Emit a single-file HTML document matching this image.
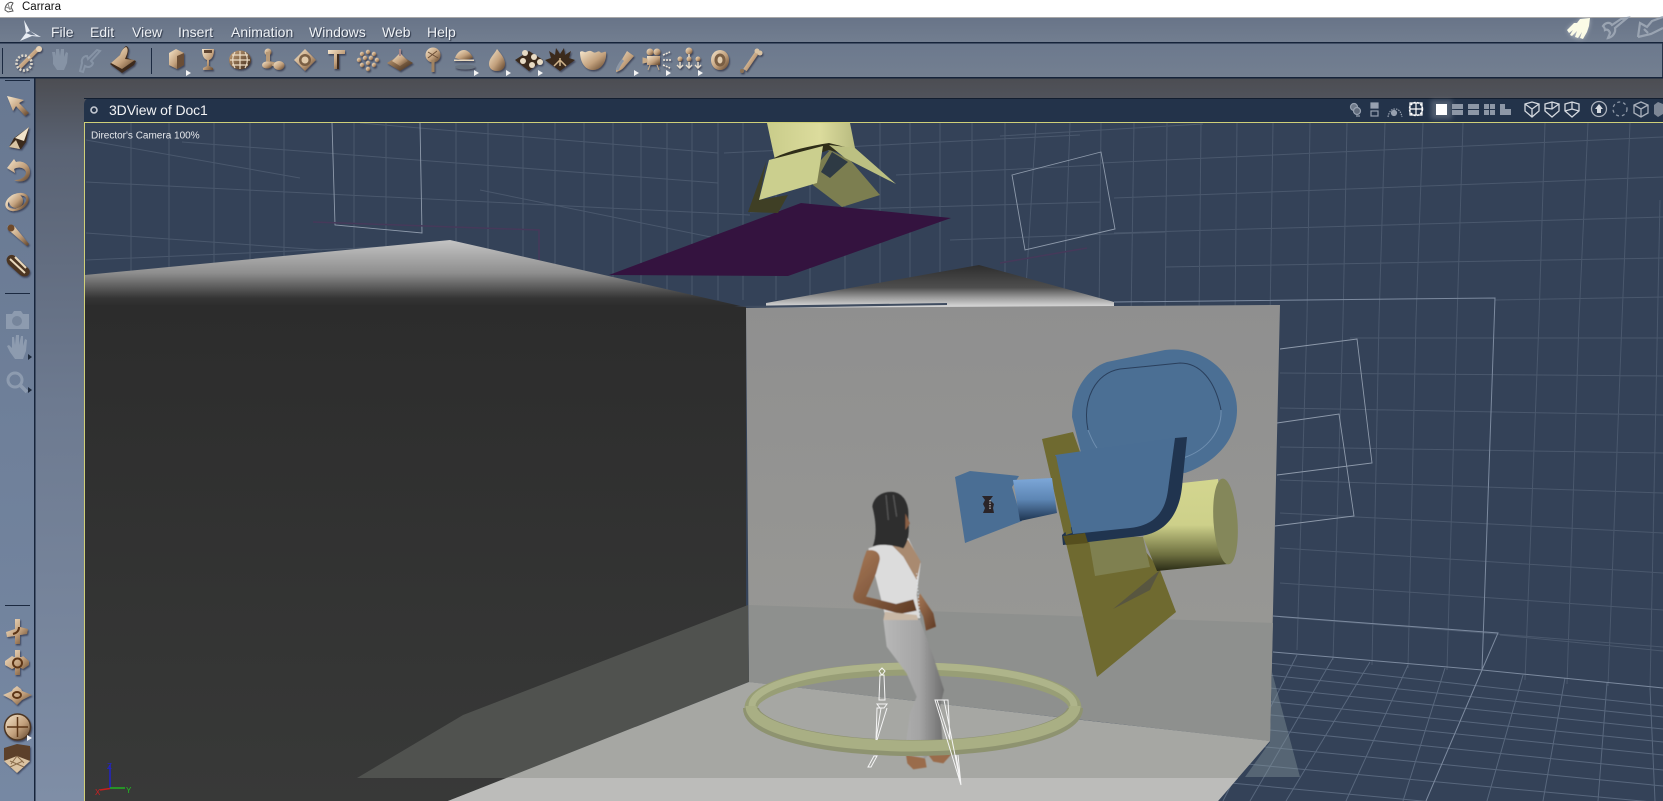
<!DOCTYPE html>
<html><head><meta charset="utf-8"><title>Carrara</title>
<style>
html,body{margin:0;padding:0;background:#344258;width:1663px;height:801px;overflow:hidden}
svg{display:block}
text{font-family:"Liberation Sans",sans-serif}
</style></head><body>
<svg xmlns="http://www.w3.org/2000/svg" width="1663" height="801" viewBox="0 0 1663 801">
<defs>
<linearGradient id="b" x1="0" y1="0" x2="1" y2="1"><stop offset="0" stop-color="#f6e6cc"/><stop offset=".55" stop-color="#c2a07c"/><stop offset="1" stop-color="#5c4028"/></linearGradient>
<linearGradient id="bd" x1="0" y1="0" x2="1" y2="1"><stop offset="0" stop-color="#c9a47c"/><stop offset="1" stop-color="#3a2616"/></linearGradient>
<linearGradient id="work" x1="0" y1="78" x2="0" y2="801" gradientUnits="userSpaceOnUse"><stop offset="0" stop-color="#4c4d52"/><stop offset=".1" stop-color="#5a6374"/><stop offset=".45" stop-color="#6d7a90"/><stop offset="1" stop-color="#7f8ea6"/></linearGradient>
<linearGradient id="menu" x1="0" y1="0" x2="0" y2="1"><stop offset="0" stop-color="#687488"/><stop offset="1" stop-color="#727e90"/></linearGradient>
<linearGradient id="tool" x1="0" y1="0" x2="0" y2="1"><stop offset="0" stop-color="#6c798e"/><stop offset="1" stop-color="#737f90"/></linearGradient>
<linearGradient id="side" x1="0" y1="0" x2="0" y2="1"><stop offset="0" stop-color="#687891"/><stop offset="1" stop-color="#7688a3"/></linearGradient>
<linearGradient id="lw" x1="0" y1="240" x2="0" y2="306" gradientUnits="userSpaceOnUse"><stop offset="0" stop-color="#c4c4c4"/><stop offset=".5" stop-color="#8e8e8e"/><stop offset=".72" stop-color="#5a5a5a"/><stop offset=".88" stop-color="#353535"/><stop offset="1" stop-color="#2c2c2c"/></linearGradient>
<linearGradient id="dw" x1="0" y1="300" x2="0" y2="801" gradientUnits="userSpaceOnUse"><stop offset="0" stop-color="#2c2c2c"/><stop offset="1" stop-color="#383938"/></linearGradient>
<linearGradient id="rt" x1="0" y1="265" x2="0" y2="306" gradientUnits="userSpaceOnUse"><stop offset="0" stop-color="#2e2e2e"/><stop offset=".55" stop-color="#4e4e4e"/><stop offset=".8" stop-color="#9c9c9c"/><stop offset="1" stop-color="#d4d4d4"/></linearGradient>
<linearGradient id="wall" x1="0" y1="305" x2="0" y2="620" gradientUnits="userSpaceOnUse"><stop offset="0" stop-color="#8f8f8f"/><stop offset="1" stop-color="#979794"/></linearGradient>
<linearGradient id="cyl" x1="0" y1="0" x2="1" y2="0"><stop offset="0" stop-color="#c9cc8a"/><stop offset=".6" stop-color="#dcdc9d"/><stop offset="1" stop-color="#b8bb80"/></linearGradient>
<linearGradient id="ycyl" x1="0" y1="0" x2="0" y2="1"><stop offset="0" stop-color="#d3d68f"/><stop offset=".5" stop-color="#cdd08a"/><stop offset=".82" stop-color="#6e7040"/><stop offset="1" stop-color="#2a2b16"/></linearGradient>
<linearGradient id="lens" x1="0" y1="0" x2="0" y2="1"><stop offset="0" stop-color="#7da7d8"/><stop offset=".5" stop-color="#5d86b4"/><stop offset="1" stop-color="#1e3450"/></linearGradient>
<linearGradient id="pants" x1="0" y1="0" x2="1" y2="0"><stop offset="0" stop-color="#b8b8b8"/><stop offset=".6" stop-color="#a4a4a4"/><stop offset="1" stop-color="#6e6e6e"/></linearGradient>
<linearGradient id="skin" x1="0" y1="0" x2="1" y2="1"><stop offset="0" stop-color="#a87a58"/><stop offset="1" stop-color="#5e3a24"/></linearGradient>
<filter id="s" x="-30%" y="-30%" width="170%" height="170%"><feDropShadow dx="1" dy="1.5" stdDeviation="0.8" flood-color="#1a2230" flood-opacity=".6"/></filter>
<filter id="glow" x="-60%" y="-60%" width="220%" height="220%"><feGaussianBlur stdDeviation="2.5"/></filter>
<filter id="soft" x="-10%" y="-10%" width="120%" height="120%"><feGaussianBlur stdDeviation="1.6"/></filter>
<clipPath id="vp"><rect x="85" y="123" width="1578" height="678"/></clipPath>
</defs>

<!-- chrome -->
<rect width="1663" height="801" fill="url(#work)"/>
<rect width="1663" height="17" fill="#fff"/>
<rect y="17" width="1663" height="1" fill="#a8a8a8"/>
<rect y="18" width="1663" height="24" fill="url(#menu)"/>
<rect y="42" width="1663" height="1.5" fill="#15233a"/>
<rect y="43.5" width="1663" height="33.5" fill="url(#tool)"/>
<rect y="77" width="1663" height="1.5" fill="#15233a"/>
<rect x="1662" y="43" width="1" height="34" fill="#253247"/>
<rect y="78.5" width="34" height="723" fill="url(#side)"/>
<rect x="34" y="78" width="1.5" height="723" fill="#16243b"/>
<rect x="5" y="80" width="25" height="1" fill="#1b2940"/>

<!-- title bar -->
<g transform="translate(7 6)" fill="none" stroke="#555" stroke-width="1"><path d="M-2 4C-2-2 3-5 6-3L4 1 6 5 1 6Z"/><path d="M1-2l2 6M-1 1l5 2" stroke="#888"/></g>
<text x="22" y="10" font-size="11.5" fill="#111">Carrara</text>

<!-- menu -->
<path d="M24 20L30 31 41 37 32 36 20 41 26 33Z" fill="#e8edf4"/><path d="M26 33L30 31 36 35.5 31 35Z" fill="#6e7a8e"/>
<g font-size="14" fill="#eef1f5" style="text-shadow:1px 1px 1px #2a3344">
<text x="51" y="37">File</text><text x="90" y="37">Edit</text><text x="132" y="37">View</text><text x="178" y="37">Insert</text><text x="231" y="37">Animation</text><text x="309" y="37">Windows</text><text x="382" y="37">Web</text><text x="427" y="37">Help</text>
</g>
<!-- top right tabs -->
<path d="M1567 30l7-7 3 0 3-4 10-1-1 8-2 6-4 7-3-1-1 1-3-1-2-1-3-1 1-2-2 0Z" fill="#fff" opacity=".4" filter="url(#glow)"/>
<path d="M1567 30l7-7 3 0 3-4 10-1-1 8-2 6-4 7-3-1 2-6-4 6-3-1 2-6-5 5-2-1 3-5-4 3Z" fill="#fbfbe6"/>
<g fill="none" stroke="#9aa4b2" stroke-width="2.2"><path d="M1603 26c3-4 7-4 9-1l9-6 6-1-12 10c1 4-2 9-7 10l2-5c-1-3-3-4-5-3 0-2-1-3-2-4Z"/><path d="M1638 37l2-14 7 4 5-6 11-4"/><path d="M1638 37l13-3 12-6M1644 29l4 4"/></g>

<!-- toolbar icons -->
<rect x="2" y="48" width="1" height="26" fill="#1b2940"/>
<rect x="151" y="48" width="1" height="26" fill="#1b2940"/>
<g filter="url(#s)">
<path d="M21 66L38 49" stroke="url(#b)" stroke-width="4" stroke-linecap="round"/><circle cx="39" cy="49" r="3" fill="#e6d2b6"/>
<circle cx="24" cy="63" r="7.5" fill="none" stroke="#dcd6ca" stroke-width="2.6" stroke-dasharray="2 1.6"/>
</g>
<path d="M53 58l-1-6 3 0 1 4 0-7 3 0 1 7 1-7 3 0 0 8 2-5 2 1-1 10-3 7-7 0-4-6Z" fill="#8693a5"/>
<path d="M80 71l2-8c-1-3 1-7 5-7l1 3 9-9 3 1-9 10 2 2c-1 4-5 5-8 3l-2 6Z" fill="none" stroke="#8693a5" stroke-width="2"/>
<g filter="url(#s)">
<path d="M110 64l10-9c1-3 3-7 6-9 3 1 3 4 2 7l-1 5 9 3-2 4-12 8Z" fill="#3d2a1a"/>
<path d="M111 63l9-8c1-3 3-7 6-8 2 1 2 4 1 7l-2 5 10 1-13 9Z" fill="url(#b)"/>
<path d="M176 49l8 4v12l-7 4-8-4V53Z" fill="url(#b)"/><path d="M177 56l7-3v12l-7 4Z" fill="#6a4e34"/>
<path d="M202 49h12c0 7-2 10-5 11v6l4 2v2h-10v-2l4-2v-6c-3-1-5-4-5-11Z" fill="url(#b)"/><path d="M204 50h8v3h-8Z" fill="#5e4430"/>
<ellipse cx="240" cy="60" rx="11" ry="9.5" fill="url(#bd)"/><path d="M232 55h16M230 60h20M232 65h16M240 51v18M235 52c-3 5-3 11 0 16M245 52c3 5 3 11 0 16" fill="none" stroke="#ecdcc4" stroke-width="1.2"/>
<circle cx="268" cy="52" r="3.5" fill="url(#b)"/><path d="M268 52v11l10 2" fill="none" stroke="#b89a78" stroke-width="4"/><ellipse cx="267" cy="65" rx="5" ry="3.5" fill="url(#b)"/><ellipse cx="279" cy="65.500" rx="5.500" ry="4.500" fill="url(#b)"/>
<path d="M305 49l11 11-11 11-11-11Z" fill="url(#b)"/><circle cx="305" cy="60" r="6" fill="#7a5e44"/><circle cx="305" cy="60" r="3.500" fill="#e0c9aa"/>
<path d="M328 50h17v4h-6v15h-5V54h-6Z" fill="url(#b)"/><path d="M337 54h2v15h-2Z" fill="#3d2a1a"/>
<g fill="url(#b)"><circle cx="362" cy="54" r="2.200"/><circle cx="368" cy="52" r="2.200"/><circle cx="374" cy="54" r="2.200"/><circle cx="359" cy="60" r="2.200"/><circle cx="365" cy="58" r="2.200"/><circle cx="371" cy="58" r="2.200"/><circle cx="377" cy="60" r="2.200"/><circle cx="362" cy="65" r="2.200"/><circle cx="368" cy="63" r="2.200"/><circle cx="374" cy="65" r="2.200"/><circle cx="368" cy="69" r="2.200"/></g>
<path d="M400 55l13 8-13 8-13-8Z" fill="url(#bd)"/><path d="M400 53l8 8-8 5-8-5Z" fill="url(#b)"/><path d="M400 49v7" stroke="#a88" stroke-width="2"/>
<circle cx="433" cy="55" r="7.500" fill="url(#b)"/><path d="M433 60v12" stroke="#a08362" stroke-width="3"/><path d="M428 52l10 6M428 58l9-7" stroke="#6c5038" stroke-width="1" fill="none"/>
<path d="M455 58c2-6 6-8 9-8s7 3 9 8c-5 2-13 2-18 0Z" fill="url(#b)"/><rect x="454" y="59.500" width="20" height="1.500" fill="#eadac0"/><ellipse cx="465" cy="67" rx="10" ry="2.500" fill="#6b7482"/>
<path d="M497 49c3 4 8 9 8 15 0 4-3 7-8 7s-8-3-8-7c0-6 5-9 8-15Z" fill="url(#b)"/>
<path d="M529 51l14 9-14 11-14-11Z" fill="#3b2a1c"/><g fill="#e8dbc4"><circle cx="525" cy="53" r="3"/><circle cx="534" cy="57" r="3"/><circle cx="523" cy="61" r="3"/><circle cx="532" cy="65" r="3"/><circle cx="540" cy="62" r="3"/></g>
<path d="M560 71l-15-11 6-2-2-7 6 4 1-7 4 6 4-6 1 7 6-4-2 7 6 2Z" fill="#3b2a1c"/><path d="M560 60l-6 6M560 60l6 6M560 58v8" stroke="#d0b48c" stroke-width="1.500"/>
<path d="M580 52c3-2 4 1 6 0s4-2 7 0 5-2 7 0 4-1 6 0c1 10-5 18-13 18s-13-8-13-18Z" fill="url(#b)"/>
<path d="M627 51l7 5-8 9c-3 4-6 6-10 7 0-4 2-8 5-11Z" fill="url(#b)"/><path d="M617 70c2-4 3-7 6-10" stroke="#8b96a5" stroke-width="3"/>
<circle cx="650" cy="52" r="3.500" fill="url(#b)"/><circle cx="657" cy="52" r="3.500" fill="url(#b)"/><rect x="647" y="56" width="13" height="9" fill="url(#b)"/><path d="M643 58l4 1v3l-4 1ZM650 65l-2 5M657 65l2 5" fill="#c8ab88" stroke="#c8ab88"/><path d="M663 55l7-3M663 60l9 0M663 65l7 3" stroke="#efe6d8" stroke-width="1.500" stroke-dasharray="2 1"/>
<circle cx="689" cy="51" r="3.500" fill="url(#b)"/><circle cx="680" cy="59" r="2.500" fill="url(#b)"/><circle cx="689" cy="59" r="2.500" fill="url(#b)"/><circle cx="698" cy="59" r="2.500" fill="url(#b)"/><path d="M689 54v3M680 62v5M689 62v5M698 62v5M677 65l3 3 3-3M686 65l3 3 3-3M695 65l3 3 3-3" fill="none" stroke="#e6dccc" stroke-width="1.400"/>
<ellipse cx="720" cy="60" rx="9" ry="10" fill="url(#b)"/><ellipse cx="720" cy="60" rx="5.500" ry="6.500" fill="#7a5e44"/><ellipse cx="720" cy="60" rx="2.500" ry="3.500" fill="#e2ccae"/>
<path d="M745 70l13-19" stroke="url(#b)" stroke-width="4"/><circle cx="742" cy="71" r="2" fill="#8b7154"/><circle cx="757" cy="51" r="2.500" fill="#d9c3a4"/><circle cx="760" cy="53" r="2.500" fill="#d9c3a4"/>
</g>
<g fill="#f4f4f4"><path d="M186 70l5 3-5 3Z"/><path d="M474 70l5 3-5 3Z"/><path d="M506 70l5 3-5 3Z"/><path d="M538 70l5 3-5 3Z"/><path d="M634 70l5 3-5 3Z"/><path d="M666 70l5 3-5 3Z"/><path d="M698 70l5 3-5 3Z"/></g>

<!-- left tools -->
<g filter="url(#s)">
<path d="M7 96l17 4-5 3 10 10-4 3-9-10-3 5Z" fill="url(#b)"/>
<path d="M29 127l-3 15-5 7-12-2 5-9Z" fill="#3a2a1c"/><path d="M29 127l-14 11 9 3Z" fill="#f0e2ca"/><path d="M9 147l7-7 4 9Z" fill="#d8c4a4"/>
<path d="M7 168l8 5-1-4c5-3 11-1 12 3 0 5-5 8-12 8 9 4 16-1 16-8s-7-12-14-10l-2-3Z" fill="url(#b)"/>
<ellipse cx="17" cy="202" rx="11" ry="7" transform="rotate(-25 17 202)" fill="none" stroke="url(#b)" stroke-width="2.500"/><circle cx="16" cy="201" r="7" fill="url(#b)"/>
<path d="M8 226c2-2 5-1 7 1l14 17-2 2-16-14c-3-2-4-4-3-6Z" fill="url(#b)"/><circle cx="11" cy="228" r="3.500" fill="#6e4a2c"/>
<path d="M7 258c2-4 6-4 9-1l12 11c3 3 2 6-1 8-3 1-6 0-8-2L8 264c-1-2-2-4-1-6Z" fill="#4c3421"/><path d="M10 259l15 14M15 257l11 11" stroke="#e8d8bc" stroke-width="2" fill="none"/>
</g>
<rect x="5" y="293" width="25" height="1" fill="#1b2940"/>
<path d="M6 314h6l2-3h7l2 3h6v15H6Z" fill="#8d9baf"/><circle cx="17" cy="321" r="5" fill="#76859b"/>
<path d="M10 352l-3-6 2-1 3 3 0-11 2 0 1 8 1-10 3 0 0 10 2-9 2 0 0 10 2-7 2 1-1 11-3 8h-8Z" fill="#8d9baf"/>
<circle cx="15" cy="380" r="7" fill="none" stroke="#8d9baf" stroke-width="3"/><path d="M20 385l7 7" stroke="#8d9baf" stroke-width="3.500"/>
<path d="M28 354l4 3-4 3ZM28 387l4 3-4 3Z" fill="#1e2a3c"/>
<rect x="5" y="605" width="25" height="1" fill="#1b2940"/>
<g filter="url(#s)">
<path d="M15 619h5v8l8 2-1 5-7 1v9h-5v-8l-8 1-1-5 9-3Z" fill="url(#b)"/><path d="M13 634c4-1 6-3 6-7" stroke="#5c3416" stroke-width="2" fill="none"/>
<path d="M15 650h5v7h2l1-1 6 5v4l-6 4-2-1h-1v7h-5v-7h-1l-2 1-7-4v-4l7-5 2 1h1Z" fill="url(#b)"/><circle cx="17.500" cy="663" r="4.500" fill="none" stroke="#5c3416" stroke-width="2"/>
<path d="M17 686l4 3 1 2 10 4-10 5-5 5-5-5-9-5 9-4 1-2Z" fill="url(#b)"/><ellipse cx="17" cy="695" rx="4" ry="3" fill="none" stroke="#5c3416" stroke-width="2"/>
<circle cx="17.500" cy="727" r="13" fill="url(#b)" stroke="#4c3421" stroke-width="1.500"/><path d="M17.500 717v20M7 727h21" stroke="#5c3416" stroke-width="1.500"/>
<path d="M4 748l13-4 13 2v14l-13 13-13-13Z" fill="#5c4029"/><path d="M17 756l13 5-13 12-13-12Z" fill="#dbc3a2"/><path d="M17 756l-6 8M17 756l7 7M10 761l14 6M23 761l-13 6" stroke="#8a6c4c" stroke-width="1"/>
</g>
<path d="M27 735l5 3-5 3Z" fill="#f4f4f4"/>

<!-- doc window header -->
<path d="M84 123V105q0-7 7-7H1663V123Z" fill="#23334a"/>
<rect x="84" y="98" width="1579" height="1" fill="#121e30"/>
<circle cx="94" cy="110" r="3" fill="#23334a" stroke="#c4c9d2" stroke-width="1.600"/>
<text x="109" y="115" font-size="14" fill="#f2f3f5" letter-spacing="-.1">3DView of Doc1</text>
<g fill="none" stroke="#97a1b0" stroke-width="1.200">
<circle cx="1354" cy="107" r="3.500" fill="#6f7a8a"/><circle cx="1357" cy="111" r="3.500" fill="#606b7c"/><path d="M1356 116h4"/>
<rect x="1371" y="103" width="7" height="5" fill="#97a1b0"/><rect x="1371" y="111" width="7" height="5"/>
<path d="M1388 117c1-5 3-8 7-8s6 3 7 8" stroke-dasharray="1.500 1"/><circle cx="1394" cy="113" r="2.500" fill="#97a1b0"/>
<g stroke="#fff"><circle cx="1416" cy="109" r="6.500" stroke-dasharray="2 1.500" stroke-width="1.500"/><path d="M1410 103h12v12h-12ZM1416 103v12M1410 109h12"/></g>
</g>
<rect x="1431" y="100" width="21" height="19" fill="#fff" opacity=".2" filter="url(#glow)"/><rect x="1436" y="104" width="11" height="11" fill="#fff"/>
<g fill="#8d97a6"><rect x="1452" y="104" width="11" height="5"/><rect x="1452" y="110" width="11" height="5"/><rect x="1468" y="104" width="11" height="5"/><rect x="1468" y="110" width="11" height="5"/><rect x="1484" y="104" width="5" height="5"/><rect x="1490" y="104" width="5" height="5"/><rect x="1484" y="110" width="5" height="5"/><rect x="1490" y="110" width="5" height="5"/><path d="M1500 104h5v5h6v6h-11Z"/></g>
<g fill="none" stroke="#d5d9df" stroke-width="1.300">
<path d="M1525 104l7-2 7 2v7l-7 6-7-6ZM1525 104l7 5 7-5M1532 109v8"/>
<path d="M1545 104l7-2 7 2v7l-7 6-7-6ZM1545 108l7 1 7-5M1552 109v-7"/>
<path d="M1565 104l7-2 7 2v7l-7 6-7-6ZM1565 111l7-2 7 2M1572 109v-7"/>
<circle cx="1599" cy="109" r="7.500" stroke="#aab1bc"/><path d="M1599 104l4 5h-2v4h-4v-4h-2Z" fill="#d5d9df" stroke="none"/>
<circle cx="1620" cy="109" r="7" stroke="#8d97a6" stroke-dasharray="3 3"/>
<path d="M1641 102l7 3v8l-7 4-7-4v-8ZM1634 105l7 4 7-4M1641 109v8" stroke="#aab1bc"/>
</g>
<path d="M1658 102l5 2v10l-5 3-4-3v-9Z" fill="#7d8796"/>

<!-- viewport -->
<g clip-path="url(#vp)">
<rect x="85" y="123" width="1578" height="678" fill="#344258"/>
<!-- wall grid -->
<path fill="none" stroke="#4a586d" stroke-width="1" d="M131 123V290M169 123V290M214 123V290M250 123V290M284 123V290M354 123V290M386 123V290M456 123V290M488 123V290M523 123V290M555 123V290M584 123V300M613 123V300M641 123V300M667 123V300M692 123V300M718 123V300M743 123V300M776 123V300M810 123V300M845 123V300M880 123V300M910 123V300M940 123V300M972 123V300M1005 123V300M1036 123L1024 320M1070 123L1063 320M1101 123L1099 320M1134 123L1131 320M1167 123L1165 320M1201 123L1199 320M1237 123L1235 320L1230 680M1273 123L1270 320L1262 650M1310 123L1307 320L1297 650M1347 123L1343 320L1333 660M1385 123L1379 320L1372 665M1423 123L1416 320L1408 668M1463 123L1457 320L1447 670M1545 123L1539 320L1525 680M1588 123L1579 320L1567 684M1630 123L1622 320L1608 686M1660 200L1650 690
M86 182L750 215M182 142L718 183M360 123L718 153M86 233L322 250M86 140L300 178M86 260L430 245M480 190L750 245M724 153L1080 135M1000 136L1203 124M1101 163L1663 137M896 175L1100 165M1114 198L1663 177M750 212L1100 202M1114 233L1663 217M1165 267L1663 258M950 240L1165 232M1495 300L1663 297M1280 373L1663 376M1280 408L1663 415M1280 447L1663 453M1280 480L1663 493M1280 513L1663 533M1280 548L1663 573M1280 583L1663 610M1280 617L1663 647M1500 635L1663 651M1350 338L1663 338"/>
<!-- floor grid -->
<path fill="none" stroke="#58677d" stroke-width="1" d="M1250 661L1663 706M1240 672L1663 717M1232 684L1663 729M1225 697L1663 742M1232 711L1663 755M1240 727L1663 770M1235 744L1663 786M1225 762L1663 803M1220 782L1560 814
M1297 655L1223 801M1333 658L1250 801M1370 662L1286 801M1408 665L1346 801M1445 668L1403 801M1523 675L1487 801M1565 678L1543 801M1607 683L1598 801M1650 688L1655 801"/>
<!-- wire rects -->
<path fill="none" stroke="#8e9aab" stroke-width=".9" d="M1012 175L1101 152L1115 229L1025 250ZM332 123L335 225L422 233L420 123M1280 349L1357 339L1372 463L1277 475M1277 423L1339 414L1354 516L1275 526"/>
<path fill="none" stroke="#7c8a9f" stroke-width="1" d="M1114 302L1495 298L1482 670L1273 652M1273 616L1498 633L1482 670L1663 688M1482 670L1426 801"/>
<path fill="none" stroke="#46395a" stroke-width="1.500" d="M313 222L539 230V262M1000 263L1087 248"/>
<!-- light cone -->
<path d="M1272 672L1300 777 1245 777 1270 742Z" fill="#8a9aa0" opacity=".4"/>
<!-- purple plane -->
<path d="M609 275L801 203 951 218 788 276Z" fill="#34133f"/>
<!-- spotlight -->
<path d="M767 123H850L855 148 830 150 775 160Z" fill="url(#cyl)"/>
<path d="M766 162L759 200 788 195 778 213 748 212Z" fill="#3f3f25"/>
<path d="M812 170L830 150 850 160 880 195 842 207 813 185Z" fill="#7c7e50"/>
<path d="M821 172L832 152 848 162 830 178Z" fill="#2e3a44"/>
<path d="M774 158C790 150 810 146 829 143L857 150 845 154 829 150 780 166Z" fill="#2f2e18"/>
<path d="M769 160L823 146 817 183 759 200Z" fill="#cbcf8e"/>
<path d="M829 145L855 148 896 184 845 158Z" fill="#bcc082"/>
<!-- left wall -->
<path d="M85 275L450 240 745 307 745 330 85 330Z" fill="url(#lw)"/>
<path d="M85 306H746V613L357 778 507 778 448 801H85Z" fill="url(#dw)"/>
<!-- right top shape -->
<path d="M766 303L979 265 1114 302 1114 308H766Z" fill="url(#rt)"/>
<path d="M734 306L947 303V305L760 308Z" fill="#3f4c60"/>
<!-- back wall -->
<path d="M746 308L1114 306 1280 305 1270 741 749 682Z" fill="url(#wall)"/>
<path d="M749 605L1273 623 1270 741 749 682Z" fill="#8e908e"/>
<!-- shadow + floor -->
<path d="M357 778L463 715 748 605 749 682 507 778Z" fill="#50524f"/>
<path d="M749 682L1100 722 1270 741 1218 801 448 801Z" fill="#a6a7a3"/>
<path d="M507 778H1238L1218 801H448Z" fill="#bcbcba"/>
<!-- camera -->
<path d="M1042 439L1073 432 1090 480 1160 570 1176 612 1097 677Z" fill="#6f6a30"/>
<path d="M1072 417C1072 390 1088 368 1107 362L1165 350C1205 345 1237 375 1237 410C1237 440 1215 463 1185 473L1085 468Z" fill="#4b6f94"/>
<path d="M1088 430C1092 440 1094 444 1097 448M1221 410C1222 430 1208 450 1183 458" fill="none" stroke="#6f8fb0" stroke-width="1"/>
<path d="M1088 430C1082 400 1095 373 1120 369L1180 363C1200 363 1215 380 1221 410" fill="none" stroke="#2a3f5c" stroke-width="1"/>
<path d="M1088 535L1143 537 1150 567 1095 576Z" fill="#7f8050"/>
<path d="M1113 609L1160 570 1150 590Z" fill="#585640"/>
<path d="M1182 483L1218 479 1228 564 1157 571 1143 537Z" fill="url(#ycyl)"/>
<ellipse cx="1225.500" cy="521.500" rx="12" ry="43" transform="rotate(-4 1225.500 521.500)" fill="#84875a"/>
<path d="M955 477L970 471 1019 476 1012 487 1022 521 965 543Z" fill="#4a6e94"/>
<path d="M982 496h11l-3 4 4 4-1 4 1 5h-11l2-5-2-4 2-4Z" fill="#2a2428"/><path d="M990 500v9" stroke="#ddd" stroke-width="1" stroke-dasharray="1.500 1"/>
<path d="M1013 480L1052 478 1057 513 1020 521Z" fill="url(#lens)"/>
<path d="M1175 438L1187 437 1182 487C1179 515 1165 533 1140 536L1063 545 1062 535Z" fill="#20344f"/>
<path d="M1063 536L1085 533 1088 543 1066 545Z" fill="#564f1e"/>
<path d="M1055 455L1175 438 1168 490C1165 512 1155 525 1130 528L1073 534Z" fill="#4a6e94"/>
<path d="M1051 456L1056 456 1072 533 1066 535Z" fill="#6f6a30"/>
<!-- ring back -->
<path d="M751 708A162 39 0 0 1 1075 708" fill="none" stroke="#989e76" stroke-width="13"/>
<path d="M752 706A161 40 0 0 1 1074 706" fill="none" stroke="#aeb48a" stroke-width="7"/>
<!-- woman -->
<g transform="translate(720 480) scale(.33333)" filter="url(#soft)">
<path d="M600 340L640 400 648 440 618 452 610 410 590 370Z" fill="url(#skin)"/>
<path d="M490 420H600L640 530 672 630 660 680 668 790 615 835 558 790 570 700 590 650 560 580 500 500Z" fill="url(#pants)"/>
<path d="M558 825L615 835 620 862 580 868 562 850ZM625 825L695 822 670 850 640 845Z" fill="#9a6c4c"/>
<path d="M445 205L505 185 565 175 602 250 590 345 600 415 495 405 465 285Z" fill="#dcdcdc"/>
<path d="M510 190L565 180 602 245 590 300 550 230Z" fill="#a98a70"/>
<path d="M440 212C465 205 485 220 478 245L468 280 438 350 528 372 580 358 590 392 540 402 470 382 412 368C395 360 398 345 405 330L430 240Z" fill="url(#skin)"/>
<path d="M495 395L590 405 595 420 490 420Z" fill="#c9b8a6"/>
<path d="M457 80C460 50 490 32 520 36 550 40 568 70 565 110 568 150 568 180 550 205 520 195 480 190 458 200 470 170 470 130 457 80Z" fill="#2f2f2f"/>
<path d="M498 45L505 120M520 45L530 110" stroke="#555" stroke-width="4" fill="none"/>
<path d="M556 100L570 130 556 150Z" fill="#8a5f44"/>
<path d="M590 280L600 420" stroke="#e6eef6" stroke-width="3" stroke-dasharray="3 7" fill="none"/>
</g>
<!-- ring front -->
<path d="M751 708A162 40 0 0 0 1075 708" fill="none" stroke="#8e9370" stroke-width="16"/>
<path d="M751 706A162 40 0 0 0 1075 706" fill="none" stroke="#a9af84" stroke-width="11"/>
<!-- skeleton -->
<g fill="none" stroke="#f5f5f5" stroke-width="1">
<path d="M882 668L885 671 882 675 879 671ZM880 675L879 700 885 700 884 675ZM877 704H887L884 708H880ZM877 708L876 740 881 708ZM887 708L877 740M868 767L874 756 877 756 871 767Z"/>
<path d="M935 700L961 785 955 755 944 700ZM937 700L950 740 948 700ZM956 755L961 785 958 755"/>
</g>
<!-- axes -->
<path d="M110 788V765" stroke="#2222c8" stroke-width="1.500"/><path d="M110 788H125" stroke="#22b022" stroke-width="1.500"/><path d="M110 788.500L100 790" stroke="#c81e1e" stroke-width="1.500"/>
<text x="107" y="769" font-size="8" fill="#2222d0">Z</text><text x="126" y="793" font-size="8" fill="#22c022">Y</text><text x="95" y="795" font-size="8" fill="#d02020">X</text>
<text x="91" y="138.500" font-size="10" fill="#e8eaee">Director's Camera 100%</text>
</g>
<!-- yellow frame -->
<rect x="84" y="122" width="1579" height="1" fill="#cfcf78"/>
<rect x="84" y="122" width="1" height="679" fill="#cfcf78"/>
</svg>
</body></html>
